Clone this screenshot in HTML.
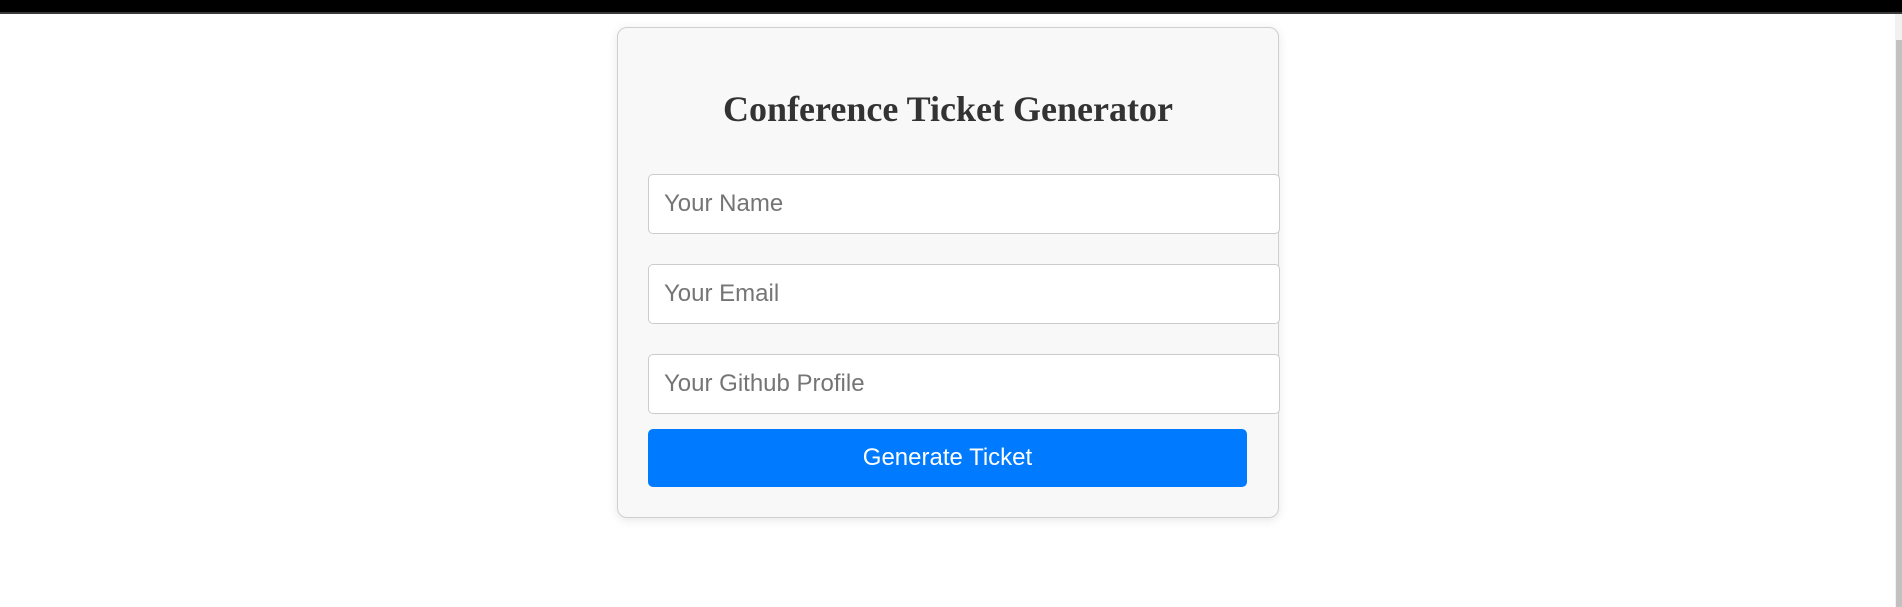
<!DOCTYPE html>
<html><head><meta charset="utf-8"><style>
html,body{margin:0;padding:0;width:1902px;height:607px;overflow:hidden;background:#fff;font-family:"Liberation Sans",sans-serif;}
.top{position:absolute;left:0;top:0;width:1902px;height:14px;background:#000;}
.top:after{content:"";position:absolute;left:0;right:0;bottom:0;height:2px;background:#3a3a3a;}
.sb{position:absolute;right:0;top:14px;width:7px;height:593px;background:#f1f1f1;}
.thumb{position:absolute;right:0;top:40px;width:6px;height:567px;background:#c1c1c1;}
.card{position:absolute;left:617px;top:27px;width:660px;height:489px;background:#f8f8f8;border:1px solid #d0d0d0;border-radius:10px;box-shadow:0 2px 10px rgba(0,0,0,0.1);}
h1{position:absolute;left:0;width:100%;top:60px;margin:0;text-align:center;font-family:"Liberation Serif",serif;font-weight:bold;font-size:36px;line-height:42px;color:#333;}
.in{position:absolute;left:30px;width:630px;height:58px;background:#fff;border:1px solid #ccc;border-radius:5px;font-size:24px;color:#757575;line-height:58px;box-sizing:content-box;}
.in span{padding-left:15px;}
.btn{position:absolute;left:30px;top:401px;width:599px;height:58px;background:#007bff;border-radius:5px;color:#fff;font-size:24px;line-height:58px;text-align:center;}
</style></head><body>
<div class="top"></div>
<div class="card">
<h1>Conference Ticket Generator</h1>
<div class="in" style="top:146px"><span>Your Name</span></div>
<div class="in" style="top:236px"><span>Your Email</span></div>
<div class="in" style="top:326px"><span>Your Github Profile</span></div>
<div class="btn">Generate Ticket</div>
</div>
<div class="sb"></div><div class="thumb"></div>
</body></html>
